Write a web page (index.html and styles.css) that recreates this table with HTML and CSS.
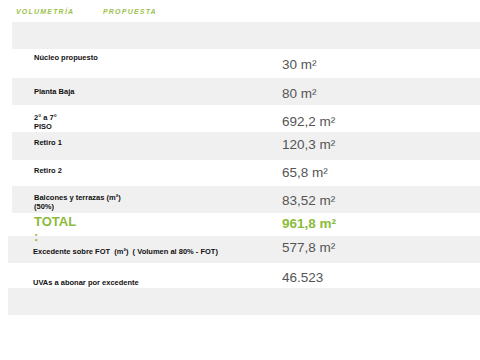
FILE: index.html
```html
<!DOCTYPE html>
<html lang="es">
<head>
<meta charset="utf-8">
<title>Volumetría propuesta</title>
<link rel="stylesheet" href="styles.css">
</head>
<body>
<div class="header">
  <span class="tab tab-first">VOLUMETRÍA</span>
  <span class="tab">PROPUESTA</span>
</div>
<div class="table">
  <div class="row alt r1"><div class="label"></div><div class="value"></div></div>
  <div class="row r2"><div class="label">Núcleo propuesto</div><div class="value">30 m²</div></div>
  <div class="row alt r3"><div class="label">Planta Baja</div><div class="value">80 m²</div></div>
  <div class="row r4"><div class="label">2° a 7°<br>PISO</div><div class="value">692,2 m²</div></div>
  <div class="row alt r5"><div class="label">Retiro 1</div><div class="value">120,3 m²</div></div>
  <div class="row r6"><div class="label">Retiro 2</div><div class="value">65,8 m²</div></div>
  <div class="row alt r7"><div class="label">Balcones y terrazas (m²)<br>(50%)</div><div class="value">83,52 m²</div></div>
  <div class="row r8 total"><div class="label">TOTAL<br>:</div><div class="value">961,8 m²</div></div>
  <div class="row alt wide r9"><div class="label">Excedente sobre FOT&nbsp; (m²)&nbsp; ( Volumen al 80% - FOT)</div><div class="value">577,8 m²</div></div>
  <div class="row wide r10"><div class="label">UVAs a abonar por excedente</div><div class="value">46.523</div></div>
  <div class="row alt wide r11"><div class="label"></div><div class="value"></div></div>
</div>
</body>
</html>
```
FILE: styles.css
```css
html, body {
  margin: 0;
  padding: 0;
  background: #ffffff;
  font-family: "Liberation Sans", Arial, sans-serif;
}

.header {
  display: flex;
  height: 22px;
  box-sizing: border-box;
  padding: 8px 0 0 16px;
}

.tab {
  font-size: 7px;
  line-height: 8px;
  font-weight: bold;
  font-style: italic;
  letter-spacing: 1.2px;
  color: #9cbf4e;
}

.tab-first {
  width: 87px;
}

.row {
  display: grid;
  grid-template-columns: 270px 1fr;
  margin-left: 12px;
  box-sizing: border-box;
  height: 27px;
  --lt: 0px;
  --vt: 0px;
}

.row.wide {
  margin-left: 8px;
  grid-template-columns: 274px 1fr;
}

.row.alt {
  background: #f0f0f0;
}

.label {
  padding: var(--lt) 0 0 22px;
  font-size: 7.5px;
  line-height: 9px;
  font-weight: bold;
  color: #111111;
  white-space: nowrap;
}

.row.wide .label {
  padding-left: 25px;
}

.value {
  padding-top: var(--vt);
  font-size: 13.5px;
  line-height: 16px;
  color: #555555;
  white-space: nowrap;
}

.total .label {
  font-size: 13px;
  line-height: 15px;
  color: #8cbb3c;
}

.total .value {
  font-weight: bold;
  color: #8cbb3c;
}

.r1 { height: 27px; }
.r2 { height: 29px; --lt: 3.5px; --vt: 8px; }
.r3 { height: 27px; --lt: 8.5px; --vt: 8px; }
.r4 { height: 27px; --lt: 7.5px; --vt: 9px; }
.r5 { height: 28px; --lt: 5.5px; --vt: 5px; }
.r6 { height: 26px; --lt: 5.5px; --vt: 5px; }
.r7 { height: 27px; --lt: 6.5px; --vt: 7px; }
.r8 { height: 23px; --lt: 0.5px; --vt: 3px; }
.r9 { height: 27px; --lt: 10.5px; --vt: 4px; }
.r10 { height: 25px; --lt: 14.5px; --vt: 7px; }
.r11 { height: 27px; }
```
